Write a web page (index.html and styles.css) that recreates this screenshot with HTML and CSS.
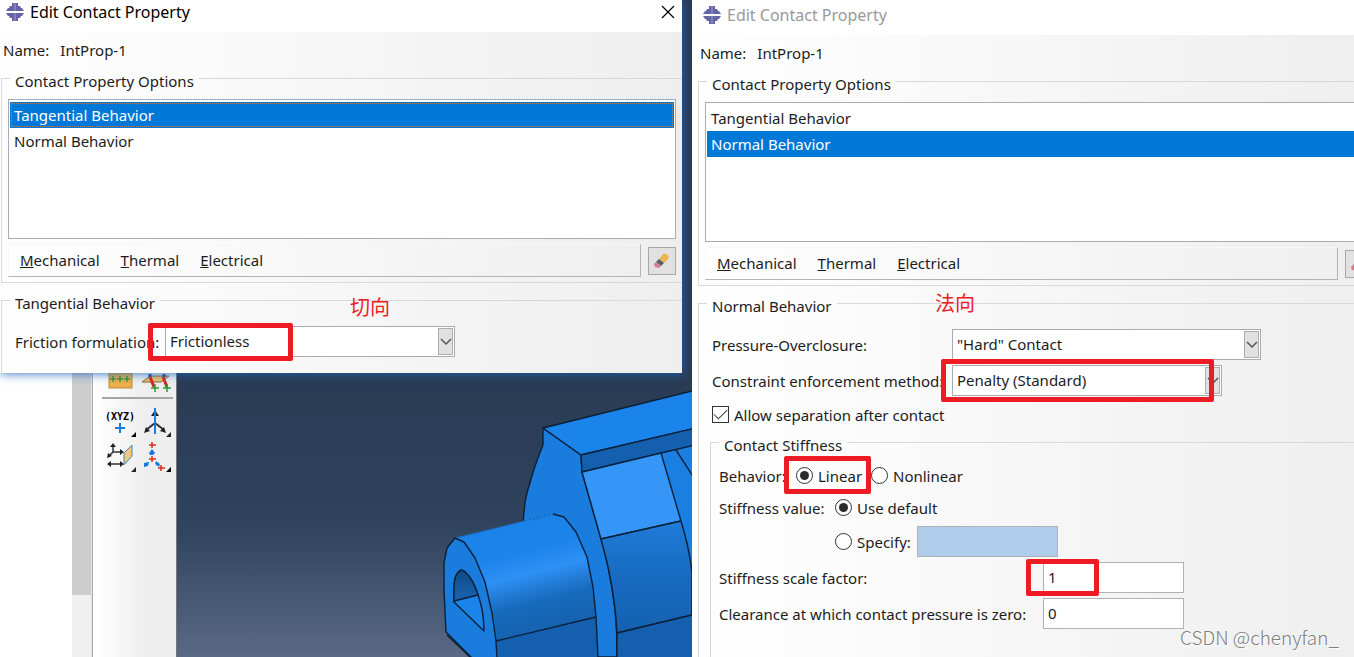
FILE: index.html
```html
<!doctype html>
<html lang="en">
  <head>
    <meta charset="utf-8">
    <title>Edit Contact Property</title>
    <link rel="stylesheet" href="styles.css">
  </head>
  <body>
    <!-- main application window, behind the dialogs -->
    <main class="app">
      <div class="tree"></div>
      <div class="scrollbar"><div class="thumb"></div></div>
      <div class="toolbox">
        <div class="tools">
          <button class="tool" aria-label="Partition face">
            <svg width="35" height="35"><rect x="7" y="4" width="23" height="22" fill="#eeb04a" stroke="#b98a3e"/><path d="M8 17h6M11 14v6M15 17h6M18 14v6M22 17h6M25 14v6" stroke="#3f9a35" stroke-width="1.5"/></svg>
          </button>
          <button class="tool" aria-label="Project points">
            <svg width="35" height="35"><path d="M5 20l8-6h19l-8 6z" fill="#edc16d" stroke="#8d6a35"/><path d="M13 4v11M27 4v11" stroke="#1c4fc0" stroke-width="3" stroke-dasharray="3 1"/><path d="M13 15l4 10M26 15l4 10" stroke="#d9261c" stroke-width="3"/><path d="M14 26h8M18 22v8M26 26h8M30 22v8" stroke="#2e9a35" stroke-width="1.5"/></svg>
          </button>
        </div>
        <hr>
        <div class="tools">
          <button class="tool" aria-label="Create datum point">
            <svg width="35" height="35"><text x="3" y="16" class="xyz">(XYZ)</text><path d="M13 24h10M18 19v10" stroke="#1a7ee0" stroke-width="2"/><path d="M34 28v5h-5z"/></svg>
          </button>
          <button class="tool" aria-label="Create datum axis">
            <svg width="35" height="35"><path d="M18 19l-9 7M18 19l9 7M18 19V8" stroke="#333" stroke-width="2"/><path d="M14 12l4-6 4 6zM7 29l2-6 4 4zM29 29l-2-6-4 4zM34 28v5h-5z" fill="#222"/><path d="M18 4v26" stroke="#1a7ee0" stroke-width="2"/></svg>
          </button>
          <button class="tool" aria-label="Create datum plane">
            <svg width="35" height="35"><path d="M11 13V6M11 13h9M11 13l-5 5M7 25h12" stroke="#333" stroke-width="1.5"/><path d="M8 8l3-4 3 4zM18 10l4 3-4 3zM5 19l1-5 4 3zM9 22l-4 3 4 3zM18 22l4 3-4 3zM34 28v5h-5z" fill="#222"/><path d="M22 14l8-8v11l-8 9z" fill="#f0c878" stroke="#3b86cc"/></svg>
          </button>
          <button class="tool" aria-label="Create datum coordinate system">
            <svg width="35" height="35"><path d="M12 6h7M15 3v6M12 20h7M15 17v6M21 29h7M24 26v6" stroke="#df2c20" stroke-width="1.5"/><path d="M12 14l3-4 3 4-2 2h-3zM7 24l5-1-1 4-4 1zM19 22l4 3-1 3-4-3z" fill="#1678e0"/><path d="M34 28v5h-5z"/></svg>
          </button>
        </div>
      </div>
      <div class="viewport">
        <svg class="model" width="515" height="657" viewBox="177 0 515 657">
          <defs>
            <linearGradient id="shaft" gradientUnits="userSpaceOnUse" x1="500" y1="525" x2="528" y2="635">
              <stop offset="0" stop-color="#1b82e8"/><stop offset=".28" stop-color="#1c84ec"/><stop offset=".48" stop-color="#2e90f4"/><stop offset=".74" stop-color="#176abb"/><stop offset="1" stop-color="#1562af"/>
            </linearGradient>
            <linearGradient id="side" x1="0" y1="0" x2="0" y2="1">
              <stop offset="0" stop-color="#1f7cd8"/><stop offset=".5" stop-color="#176ac0"/><stop offset="1" stop-color="#1561b0"/>
            </linearGradient>
            <linearGradient id="hole" x1="0" y1="0" x2="0" y2="1">
              <stop offset="0" stop-color="#114b87"/><stop offset="1" stop-color="#1864b0"/>
            </linearGradient>
          </defs>
          <g stroke="#0a2038" stroke-width="1.4" stroke-linejoin="round">
            <path fill="#1a7dde" d="M543 428v17q-9 22-13 38-4 12-5 20l-2 19v135h94q0-30-2-47-2-16-5-33-3-18-9-38l-19-67-1-17z"/>
            <path fill="#1b84eb" d="M543 428l157-39v38l-119 28z"/>
            <path fill="#1560ae" d="M581 455l119-28v17l-118 28z"/>
            <path fill="#1b7fe2" d="M661 453l39-9v213h-20z"/>
            <path fill="none" d="M676 450l24 37"/>
            <path fill="#3596f8" d="M582 472l79-19 20 68-80 18z"/>
            <path fill="url(#side)" d="M601 539l80-18q8 26 11 51v43l-75 18q-2-45-16-94z"/>
            <path fill="#1560ae" d="M617 633l83-20v50h-83z"/>
          </g>
          <path fill="url(#shaft)" d="M455 538l98-24 11 3 12 15 11 25 6 30 3 30-101 24-10-59-21-40z"/>
          <path fill="#1560ae" d="M496 641l100-24 2 40H497z"/>
          <g fill="none" stroke="#0a2038" stroke-width="1.4" stroke-linejoin="round">
            <path d="M553 514l11 3 12 15 11 25 6 30 3 30 2 40M496 641l100-24"/>
            <path stroke-dasharray="2 2" stroke="#1a66b4" d="M455 538l98-24"/>
            <path fill="#1a7dde" d="M455 538l-8 10-3 15v27l2 42 26 26h25l-1-17-4-28-7-31-10-24-11-16z"/>
            <path fill="#1b84eb" d="M454 602v-12q0-12 3-16 4-7 9-1 7 6 12 22 6 16 6 36z"/>
            <path fill="url(#hole)" d="M454 601v-11q0-12 3-16 4-7 9-1 7 6 12 22z"/>
            <path d="M447 635l24 23"/>
          </g>
        </svg>
      </div>
    </main>

    <!-- tangential behavior -->
    <section class="dialog dialog-front">
      <header class="titlebar">
        <svg class="logo" width="18" height="18"><path d="M6 0h6v3h2l1 2h1l2 3H0l2-3h1l1-2h2zM0 10h18l-2 3h-1l-1 2h-2v3H6v-3H4l-1-2H2z" fill="#6464a6"/><path d="M8 0h2v8H8zM8 10h2v8H8z" fill="#8282b9"/></svg>
        <h1>Edit Contact Property</h1>
        <button class="close" aria-label="Close">
          <svg width="14" height="14"><path d="M1 1l12 12M13 1L1 13" stroke="#000" stroke-width="1.2"/></svg>
        </button>
      </header>
      <div class="content">
        <p class="name"><span>Name:</span><span>IntProp-1</span></p>
        <fieldset>
          <legend>Contact Property Options</legend>
          <ul class="list" role="listbox" aria-label="Contact Property Options">
            <li class="selected focused" role="option" aria-selected="true">Tangential Behavior</li>
            <li role="option">Normal Behavior</li>
          </ul>
          <div class="menu-row">
            <nav class="menu">
              <button><u>M</u>echanical</button>
              <button><u>T</u>hermal</button>
              <button><u>E</u>lectrical</button>
            </nav>
            <button class="erase" aria-label="Delete">
              <svg width="18" height="18"><path d="M11 1l5 3-1 3-4 4-5-4z" fill="#f0b44c"/><path d="M6 7l5 4-3 3-5-4z" fill="#566270"/><path d="M3 10l5 4-2 2-4-1-1-3z" fill="#d8788c"/></svg>
            </button>
          </div>
        </fieldset>
        <fieldset>
          <legend>Tangential Behavior</legend>
          <div class="row">
            <label class="friction-label" for="friction">Friction formulation:</label>
            <div class="combo combo-medium">
              <select id="friction"><option>Frictionless</option></select>
              <span class="arrow"><svg width="12" height="8"><path d="M1 1l5 5 5-5" fill="none" stroke="#555" stroke-width="1.5"/></svg></span>
              <span class="mark mark-friction"></span>
            </div>
          </div>
        </fieldset>
      </div>
      <span class="note note-tangential" lang="zh">切向</span>
    </section>

    <!-- normal behavior -->
    <section class="dialog dialog-back">
      <header class="titlebar">
        <svg class="logo" width="18" height="18"><path d="M6 0h6v3h2l1 2h1l2 3H0l2-3h1l1-2h2zM0 10h18l-2 3h-1l-1 2h-2v3H6v-3H4l-1-2H2z" fill="#6464a6"/><path d="M8 0h2v8H8zM8 10h2v8H8z" fill="#8282b9"/></svg>
        <h1>Edit Contact Property</h1>
      </header>
      <div class="content">
        <p class="name"><span>Name:</span><span>IntProp-1</span></p>
        <fieldset>
          <legend>Contact Property Options</legend>
          <ul class="list" role="listbox" aria-label="Contact Property Options">
            <li role="option">Tangential Behavior</li>
            <li class="selected" role="option" aria-selected="true">Normal Behavior</li>
          </ul>
          <div class="menu-row">
            <nav class="menu">
              <button><u>M</u>echanical</button>
              <button><u>T</u>hermal</button>
              <button><u>E</u>lectrical</button>
            </nav>
            <button class="erase" aria-label="Delete">
              <svg width="18" height="18"><path d="M11 1l5 3-1 3-4 4-5-4z" fill="#f0b44c"/><path d="M6 7l5 4-3 3-5-4z" fill="#566270"/><path d="M3 10l5 4-2 2-4-1-1-3z" fill="#d8788c"/></svg>
            </button>
          </div>
        </fieldset>
        <fieldset>
          <legend>Normal Behavior</legend>
          <div class="row">
            <label class="wide-label" for="pressure">Pressure-Overclosure:</label>
            <div class="combo combo-large">
              <select id="pressure"><option>"Hard" Contact</option></select>
              <span class="arrow"><svg width="12" height="8"><path d="M1 1l5 5 5-5" fill="none" stroke="#555" stroke-width="1.5"/></svg></span>
            </div>
          </div>
          <div class="row">
            <label class="wide-label" for="method">Constraint enforcement method:</label>
            <div class="combo combo-small">
              <select id="method"><option>Penalty (Standard)</option></select>
              <span class="arrow"><svg width="12" height="8"><path d="M1 1l5 5 5-5" fill="none" stroke="#555" stroke-width="1.5"/></svg></span>
              <span class="mark mark-method"></span>
            </div>
          </div>
          <label class="check"><input type="checkbox" checked>Allow separation after contact</label>
          <fieldset class="stiffness">
            <legend>Contact Stiffness</legend>
            <div class="row row-radio">
              <span class="behavior-label">Behavior:</span>
              <label class="radio radio-linear"><input type="radio" name="behavior" checked>Linear<span class="mark mark-linear"></span></label>
              <label class="radio"><input type="radio" name="behavior">Nonlinear</label>
            </div>
            <div class="row row-radio">
              <span class="value-label">Stiffness value:</span>
              <label class="radio"><input type="radio" name="value" checked>Use default</label>
            </div>
            <div class="row">
              <span class="value-label"></span>
              <label class="radio specify"><input type="radio" name="value">Specify:</label>
              <input class="text" type="text" aria-label="Stiffness value" disabled>
            </div>
            <div class="row">
              <label class="factor-label" for="factor">Stiffness scale factor:</label>
              <div class="field">
                <input class="text" type="text" id="factor" value="1">
                <span class="mark mark-factor"></span>
              </div>
            </div>
            <div class="row">
              <label class="factor-label" for="clearance">Clearance at which contact pressure is zero:</label>
              <input class="text" type="text" id="clearance" value="0">
            </div>
          </fieldset>
        </fieldset>
      </div>
      <span class="note note-normal" lang="zh">法向</span>
    </section>

    <span class="watermark">CSDN @chenyfan_</span>
  </body>
</html>
```
FILE: styles.css
```css
* {
  box-sizing: border-box;
}
body {
  margin: 0;
  height: 100vh;
  position: relative;
  overflow: hidden;
  font-family: "Noto Sans", "Noto Sans CJK SC", sans-serif;
  font-size: 15px;
  line-height: 20px;
  color: #1c1c1c;
}
button, input, select {
  font: inherit;
  color: inherit;
  margin: 0;
}
button {
  padding: 0;
  border: none;
  background: none;
}

/* application behind */
.app {
  display: flex;
  height: 100%;
}
.tree {
  width: 72px;
  background: #fff;
}
.scrollbar {
  width: 20px;
  background: #f0f0f0;
  border-right: 1px solid #e4e4e4;
}
.thumb {
  height: 595px;
  background: #cdcdcd;
}
.toolbox {
  width: 85px;
  padding: 362px 3px 0 9px;
  border-left: 1px solid #a8a8b0;
  border-right: 1px solid #777;
  background: linear-gradient(to right, #fff, #eee 65%);
}
.tools {
  display: flex;
  flex-wrap: wrap;
}
.tool {
  width: 35px;
  height: 35px;
}
.tool svg {
  display: block;
}
.toolbox hr {
  margin: 0 0 5px;
  border: none;
  height: 2px;
  background: #a5a5a5;
}
.xyz {
  font: bold 10px "DejaVu Sans Mono", monospace;
}
.viewport {
  flex: 1;
  background: linear-gradient(#2a3b53 57%, #2f435d 80%, #5a6985);
}
.model {
  display: block;
}

/* dialogs */
.dialog {
  position: absolute;
  overflow: hidden;
  background: #fff;
}
.dialog-front {
  top: 0;
  left: 0;
  width: 682px;
  height: 373px;
  box-shadow: 0 0 10px #1c66bd;
}
.dialog-back {
  top: 0;
  left: 692px;
  width: 687px;
  min-height: 100%;
  padding: 3px 0 0 5px;
}
.titlebar {
  display: flex;
  align-items: center;
  height: 32px;
  padding: 0 7px 8px 6px;
}
.titlebar h1 {
  margin: 0 auto 0 6px;
  font-size: 16px;
  font-weight: normal;
  color: #000;
}
.dialog-back h1 {
  color: #999;
}
.close {
  width: 14px;
  height: 14px;
}
.close svg, .erase svg {
  display: block;
}
.content {
  background: linear-gradient(to right, #fefefe, #fcfcfc 20%, #f6f6f6 52%, #eee);
}
.name {
  display: flex;
  gap: 11px;
  margin: 0;
  padding: 8px 3px 4px;
}
fieldset {
  min-width: 0;
  margin: 0 -20px 3px 1px;
  padding: 7px 25px 5px 6px;
  border: 1px solid #d9d9d9;
}
.content > fieldset:last-child {
  margin-bottom: 0;
  padding: 12px 20px 16px 13px;
}
legend {
  margin-left: 2px;
  padding: 7px 5px 1px;
}
.content > fieldset:last-child > legend {
  margin-left: -5px;
}
.list {
  height: 140px;
  margin: 0;
  padding: 2px 1px;
  list-style: none;
  background: #fff;
  border: 1px solid #aaaab2;
}
.list li {
  height: 26px;
  padding: 3px 4px;
}
.list .selected {
  color: #fff;
  background: #0078d7;
}
.list .focused {
  outline: 1px dotted #a58468;
  outline-offset: -2px;
}
.menu-row {
  display: flex;
  align-items: center;
  gap: 7px;
  margin-top: 5px;
}
.menu {
  flex: 1;
  display: flex;
  gap: 21px;
  height: 33px;
  padding: 0 0 2px 11px;
  border: 1px solid #b4b4b4;
  border-top-color: #f7f7fb;
  border-left-color: #f7f7fb;
}
.erase {
  width: 28px;
  height: 28px;
  padding: 4px;
  border: 1px solid #a8a8a8;
  background: #e1e1e1;
}

/* form rows */
.row {
  display: flex;
  align-items: center;
  height: 31px;
  margin-bottom: 5px;
}
.row-radio {
  height: 27px;
}
.dialog-front .row {
  margin-bottom: 0;
}
.friction-label {
  width: 150px;
}
.wide-label {
  width: 240px;
}
.behavior-label {
  width: 77px;
}
.value-label {
  width: 116px;
}
.factor-label {
  width: 324px;
}
.row label, .row span {
  white-space: nowrap;
}
.combo, .field {
  position: relative;
  height: 31px;
}
.combo-small {
  width: 270px;
}
.combo-medium {
  width: 290px;
}
.combo-large {
  width: 309px;
}
.combo select {
  appearance: none;
  width: 100%;
  height: 100%;
  padding: 0 20px 1px 4px;
  border: 1px solid #aaaab2;
  border-radius: 0;
  background: #fff;
}
.arrow {
  position: absolute;
  top: 2px;
  right: 2px;
  bottom: 2px;
  width: 15px;
  display: flex;
  align-items: center;
  justify-content: center;
  border: 1px solid #adadad;
  background: #e1e1e1;
  pointer-events: none;
}
.text {
  width: 141px;
  height: 31px;
  padding: 0 4px 1px;
  border: 1px solid #b0b0b6;
  border-radius: 0;
  background: #fff;
}
.text:disabled {
  background: #b0cdeb;
}
.check, .radio {
  display: flex;
  align-items: center;
  gap: 5px;
}
.check {
  height: 27px;
}
.radio {
  position: relative;
}
.radio-linear {
  width: 75px;
}
.specify {
  width: 82px;
}
.check input, .radio input {
  appearance: none;
  display: flex;
  align-items: center;
  justify-content: center;
  width: 17px;
  height: 17px;
  border: 1px solid #333;
  background: #fff;
}
.check input::before {
  content: "";
  width: 12px;
  height: 6px;
  margin-top: -4px;
  border: solid #444;
  border-width: 0 0 1px 1px;
  transform: rotate(-45deg);
}
.radio input {
  border-radius: 50%;
}
.radio input:checked::before {
  content: "";
  width: 9px;
  height: 9px;
  border-radius: 50%;
  background: #2b2b2b;
}
.stiffness {
  margin: 0 -20px 0 -2px;
  padding: 6px 0 23px 8px;
}
.stiffness legend {
  margin-left: 0;
}

/* red annotations over the dialogs */
.mark {
  position: absolute;
  border: 5px solid #ed1c24;
  border-radius: 2px;
  pointer-events: none;
}
.mark-friction {
  top: -3px;
  left: -17px;
  width: 145px;
  height: 38px;
}
.mark-method {
  top: -6px;
  left: -11px;
  width: 273px;
  height: 43px;
}
.mark-linear {
  top: -10px;
  left: -12px;
  width: 87px;
  height: 38px;
}
.mark-factor {
  top: -3px;
  left: -17px;
  width: 73px;
  height: 37px;
}
.note {
  position: absolute;
  font-family: "Noto Sans CJK SC", sans-serif;
  font-size: 20px;
  color: #ed1c24;
}
.note-tangential {
  top: 297px;
  left: 350px;
}
.note-normal {
  top: 293px;
  left: 243px;
}
.watermark {
  position: absolute;
  right: 15px;
  bottom: 10px;
  font-family: "Noto Sans CJK SC", sans-serif;
  font-size: 19px;
  font-weight: 300;
  color: #808080;
  text-shadow: 1px 1px 1px #fff;
}
```
